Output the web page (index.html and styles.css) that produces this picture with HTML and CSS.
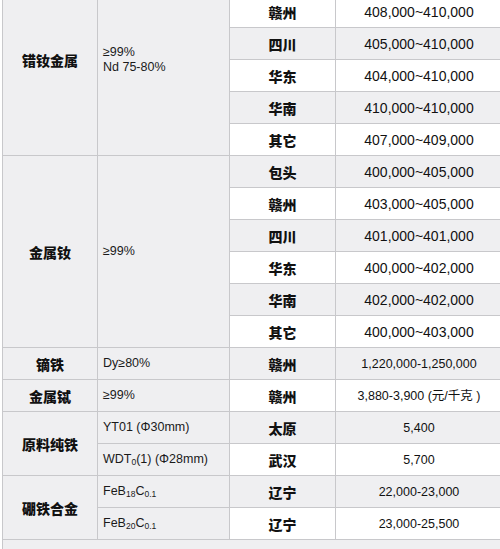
FILE: index.html
```html
<!DOCTYPE html>
<html>
<head>
<meta charset="utf-8">
<link rel="stylesheet" href="styles.css">
</head>
<body>
<div class="wrap">
<table class="price">
  <colgroup><col class="c1"><col class="c2"><col class="c3"><col class="c4"></colgroup>
  <tbody>
    <tr class="g"><td class="name" rowspan="6">错钕金属</td><td class="spec" rowspan="6">≥99%<br>Nd 75-80%</td><td class="reg"></td><td class="val"></td></tr>
    <tr class="w"><td class="reg">赣州</td><td class="val">408,000~410,000</td></tr>
    <tr class="g"><td class="reg">四川</td><td class="val">405,000~410,000</td></tr>
    <tr class="w"><td class="reg">华东</td><td class="val">404,000~410,000</td></tr>
    <tr class="g"><td class="reg">华南</td><td class="val">410,000~410,000</td></tr>
    <tr class="w"><td class="reg">其它</td><td class="val">407,000~409,000</td></tr>

    <tr class="g"><td class="name" rowspan="6">金属钕</td><td class="spec" rowspan="6">≥99%</td><td class="reg">包头</td><td class="val">400,000~405,000</td></tr>
    <tr class="w"><td class="reg">赣州</td><td class="val">403,000~405,000</td></tr>
    <tr class="g"><td class="reg">四川</td><td class="val">401,000~401,000</td></tr>
    <tr class="w"><td class="reg">华东</td><td class="val">400,000~402,000</td></tr>
    <tr class="g"><td class="reg">华南</td><td class="val">402,000~402,000</td></tr>
    <tr class="w"><td class="reg">其它</td><td class="val">400,000~403,000</td></tr>

    <tr class="g"><td class="name">镝铁</td><td class="spec sm">Dy≥80%</td><td class="reg">赣州</td><td class="val sm">1,220,000-1,250,000</td></tr>
    <tr class="w"><td class="name">金属铽</td><td class="spec sm">≥99%</td><td class="reg">赣州</td><td class="val sm">3,880-3,900 (元/千克 )</td></tr>

    <tr class="g"><td class="name" rowspan="2">原料纯铁</td><td class="spec sm">YT01 (Φ30mm)</td><td class="reg">太原</td><td class="val sm">5,400</td></tr>
    <tr class="w"><td class="spec sm">WDT<sub>0</sub>(1) (Φ28mm)</td><td class="reg">武汉</td><td class="val sm">5,700</td></tr>

    <tr class="g"><td class="name" rowspan="2">硼铁合金</td><td class="spec sm">FeB<sub>18</sub>C<sub>0.1</sub></td><td class="reg">辽宁</td><td class="val sm">22,000-23,000</td></tr>
    <tr class="w"><td class="spec sm">FeB<sub>20</sub>C<sub>0.1</sub></td><td class="reg">辽宁</td><td class="val sm">23,000-25,500</td></tr>

    <tr class="g last"><td colspan="4"></td></tr>
  </tbody>
</table>
</div>
</body>
</html>
```

FILE: styles.css
```css
html, body {
  margin: 0;
  padding: 0;
  background: #ffffff;
  overflow: hidden;
}
.wrap {
  width: 500px;
  height: 549px;
  overflow: hidden;
  padding-left: 2px;
  box-sizing: border-box;
}
.price {
  margin-top: -37px;
  border-collapse: separate;
  border-spacing: 0;
  table-layout: fixed;
  width: 500px;
  font-family: "Liberation Sans", "Noto Sans CJK SC", sans-serif;
  color: #111111;
}
.c1 { width: 95px; }
.c2 { width: 132px; }
.c3 { width: 106px; }
.c4 { width: 167px; }
.price td {
  border-left: 1px solid #c8c8cb;
  border-top: 1px solid #c8c8cb;
  height: 31px;
  padding: 0;
  box-sizing: border-box;
}
.price tr { height: 32px; }
.g td { background: #efeff1; }
.w td { background: #ffffff; }
.price td.name,
.price td.spec {
  background: #efeff1;
}
.name {
  text-align: center;
  font-family: "Noto Sans CJK SC", sans-serif;
  font-weight: 900;
  font-size: 14px;
  line-height: 16px;
}
.spec {
  text-align: left;
  padding-left: 5px !important;
  font-size: 12.5px;
  line-height: 15px;
  color: #1a1a1a;
}
.reg {
  text-align: center;
  font-family: "Noto Sans CJK SC", sans-serif;
  font-weight: 900;
  font-size: 14px;
  line-height: 16px;
}
.val {
  text-align: center;
  font-size: 14px;
  line-height: 16px;
}
.val.sm {
  font-size: 12.5px;
}
sub {
  font-size: 8.5px;
  vertical-align: -2px;
  line-height: 0;
}
.last td {
  height: 40px;
}
```
